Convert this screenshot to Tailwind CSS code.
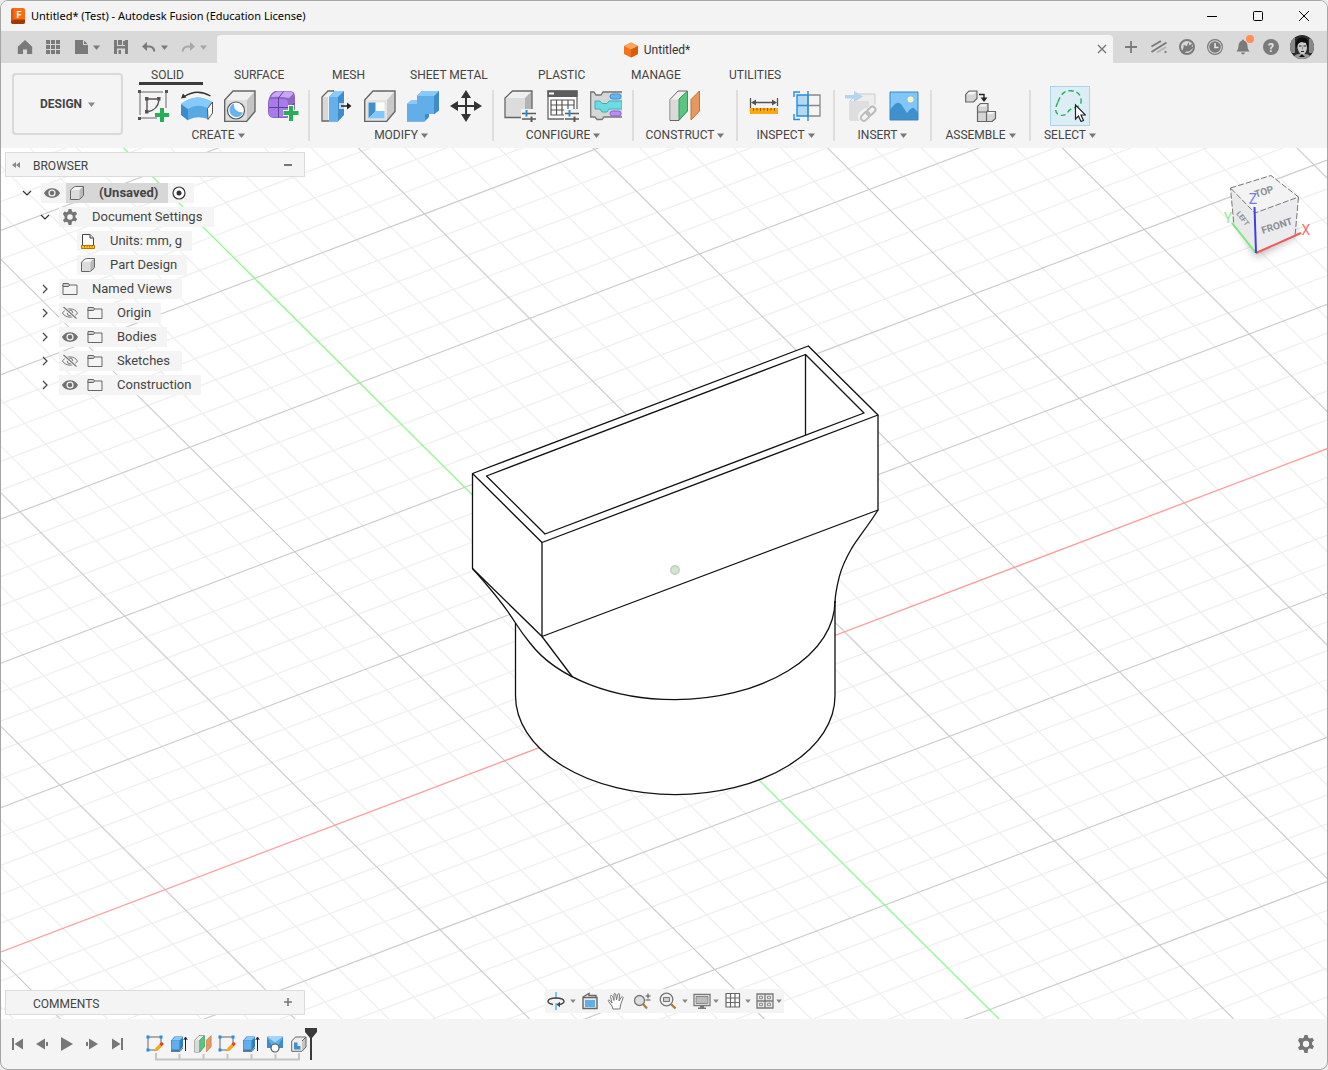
<!DOCTYPE html>
<html lang="en">

<head>
  <meta charset="UTF-8" />
  <meta name="viewport" content="width=device-width, initial-scale=1.0" />
  <title>Untitled* (Test) - Autodesk Fusion (Education License)</title>
  <script src="https://cdn.jsdelivr.net/npm/@tailwindcss/browser@4"></script>
</head>

<body class="bg-[#ececec] h-screen font-['Roboto','Liberation_Sans',sans-serif] text-xs text-[#444]">

  <!-- shared icons -->
  <svg class="hidden">
    <symbol id="caret" viewBox="0 0 7 5"><path d="M0 0.500h7L3.500 5z" fill="currentColor" /></symbol>
    <symbol id="chev-down" viewBox="0 0 10 10"><path d="M1 3l4 4 4-4" fill="none" stroke="#333" stroke-width="1.200" /></symbol>
    <symbol id="chev-right" viewBox="0 0 10 10"><path d="M3 1l4 4-4 4" fill="none" stroke="#444" stroke-width="1.200" /></symbol>
    <symbol id="eye" viewBox="0 0 16 16">
      <path d="M0 8C3 1.500 13 1.500 16 8C13 14.500 3 14.500 0 8z" fill="#707070" />
      <circle cx="8" cy="8" r="3.600" fill="#f4f4f4" /><circle cx="8" cy="8" r="2.300" fill="#707070" />
    </symbol>
    <symbol id="eye-off" viewBox="0 0 16 16">
      <path d="M.5 8C3.500 2.500 12.500 2.500 15.500 8C12.500 13.500 3.500 13.500.5 8z" fill="none" stroke="#777" />
      <circle cx="8" cy="8" r="2.800" fill="none" stroke="#777" />
      <path d="M1.500 2.500l13 11" stroke="#f4f4f4" stroke-width="3" /><path d="M1.500 2l13 11.500" stroke="#777" stroke-width="1.200" />
    </symbol>
    <symbol id="folder" viewBox="0 0 16 14">
      <path d="M1 12.500V3h14v9.500z" fill="#f4f4f4" stroke="#666" />
      <path d="M1 4.500v-3h5.500l1 1.500-1 1.500z" fill="#d0d0d0" stroke="#666" />
    </symbol>
    <symbol id="part" viewBox="0 0 16 16">
      <path d="M1.500 5v9.500h8.500l4-4V1.500H6z" fill="#dcdcdc" />
      <path d="M2 5l4-3.500h8L10.500 5z" fill="#f2f2f2" /><path d="M10.500 5L14 1.500v9l-3.500 4z" fill="#b9b9b9" />
      <path d="M1.500 6q0-1 .8-1.700L5 2q.8-.5 1.500-.5H14.500V10q0 .8-.6 1.300l-3 2.700q-.5.500-1.400.5h-8z" fill="none" stroke="#666" />
    </symbol>
    <symbol id="gear" viewBox="0 0 16 16">
      <path fill-rule="evenodd" fill="#757575" d="M6.600 0h2.800l.5 2.300 1.500.9 2.300-.8 1.400 2.500-1.700 1.600v2l1.700 1.600-1.400 2.500-2.300-.8-1.500.9L9.400 16H6.600l-.5-2.300-1.500-.9-2.300.8-1.400-2.500L2.600 9.500v-2L.9 4.900l1.400-2.500 2.300.8 1.500-.9zM8 5.200a2.800 2.800 0 1 0 0 5.600a2.800 2.800 0 0 0 0-5.600z" />
    </symbol>
    <symbol id="planes" viewBox="0 0 32 32">
      <path d="M1 9.500L9 1h9v20l-8 9.500H1z" fill="#f0f0f0" stroke="#666" />
      <path d="M1.500 9.500H10V30H1.500z" fill="#dadada" /><path d="M10 9l8.500-8v20L10 30z" fill="#58c580" stroke="#2f9c58" />
      <path d="M22 9.500L30.500 1v20L22 30z" fill="#e6985f" stroke="#c2703a" />
    </symbol>
    <symbol id="shell" viewBox="0 0 32 32">
      <path d="M.7 10L9 1h22v20.500l-8.500 10H.7z" fill="#efefef" /><path d="M23 10l8-9v20.500l-8 10z" fill="#c9c9c9" />
      <path d="M.7 10h22v21.500H.7z" fill="#e3e3e3" /><path d="M.7 10L9 1h22v20.500l-8.500 10H.7z" fill="none" stroke="#666" stroke-width="1.400" />
      <path d="M4.500 12.500h16v16h-16z" fill="#fff" /><path d="M4.500 12.500h7v9l-7 7z" fill="#3f8fcd" /><path d="M4.500 28.500l7-7.500h9v7.500z" fill="#82c6fb" />
    </symbol>
    <symbol id="tl-sketch" viewBox="0 0 18 18">
      <path d="M3 2h11M2 3v11M15 3v6M3 15h6" fill="none" stroke="#666" />
      <path d="M.5.500h3v3h-3zM13.500.500h3v3h-3zM.5 13.500h3v3h-3z" fill="#1e8fe6" />
      <path d="M8.500 16.500l1-3.500 4.500-4.500 2.500 2.500-4.500 4.500z" fill="#f5a81c" /><path d="M13.500 9l1.500-1.500q1-.8 2 .2t.2 2L15.700 11.200z" fill="#e23b2e" />
    </symbol>
    <symbol id="tl-extrude" viewBox="0 0 18 18">
      <path d="M1 5.500L4.500 1.500H13V12l-3.500 4H1z" fill="#2f7fc0" /><path d="M1.500 6h8v8q0 .5-.5.500H1.500z" fill="#62aee8" />
      <path d="M1.500 5.500L5 2h8L9.500 5.500z" fill="#86c8fa" /><path d="M1 16.500h9l3-3.500" fill="none" stroke="#777" />
      <path d="M15.500 16V3M13.800 5l1.700-3 1.700 3" fill="none" stroke="#222" />
    </symbol>
    <symbol id="config" viewBox="0 0 14 12"><path d="M0 3.500h14M0 9h14" stroke="#5a5a5a" stroke-width="1.600" /><path d="M4.500 0v6.500" stroke="#1e8fe6" stroke-width="2" /><path d="M9.500 6.500V12" stroke="#5a5a5a" stroke-width="2" /></symbol>
  </svg>

  <div class="h-full flex flex-col rounded-lg border border-[#a5a5a5] overflow-hidden bg-[#f4f4f4]">

    <!-- title bar -->
    <header class="h-[30px] shrink-0 flex items-center bg-[#f3f3f3] pl-2.5 text-black">
      <svg class="w-3.5 h-4 mr-1.5" viewBox="0 0 14 16">
        <rect width="14" height="16" rx="2" fill="#ff6a13" /><path d="M0 11.500h14V14q0 2-2 2H2q-2 0-2-2z" fill="#9c3a06" /><path d="M0 2l2.500-2v12L0 13z" fill="#e0560a" />
        <text x="8" y="9.500" text-anchor="middle" font-size="9" font-weight="700" fill="#fff" font-family="Roboto">F</text>
      </svg>
      <h1 class="font-['Noto_Sans',sans-serif] text-[11px] flex-1">Untitled* (Test) - Autodesk Fusion (Education License)</h1>
      <button class="w-[46px] h-full grid place-items-center" aria-label="Minimize"><svg class="size-3" viewBox="0 0 12 12"><path d="M1 6.500h10" stroke="#000" /></svg></button>
      <button class="w-[46px] h-full grid place-items-center" aria-label="Maximize"><svg class="size-3" viewBox="0 0 12 12"><rect x="1.500" y="1.500" width="9" height="9" rx="1" fill="none" stroke="#000" /></svg></button>
      <button class="w-[46px] h-full grid place-items-center" aria-label="Close"><svg class="size-3" viewBox="0 0 12 12"><path d="M1 1l10 10M11 1L1 11" stroke="#000" /></svg></button>
    </header>

    <!-- quick access and document tabs -->
    <div class="h-8 shrink-0 flex bg-[#d9d9d9] text-[#7a7a7a]">
      <div class="w-[216px] flex items-center gap-3 pl-4">
        <button aria-label="Home"><svg class="size-4" viewBox="0 0 16 16"><path d="M8 1L.8 7.800V15H6v-4.500h4V15h5.200V7.800z" fill="currentColor" /></svg></button>
        <button aria-label="Data panel"><svg class="size-4" viewBox="0 0 16 16"><path d="M1 1h4v4H1zM6 1h4v4H6zM11 1h4v4h-4zM1 6h4v4H1zM6 6h4v4H6zM11 6h4v4h-4zM1 11h4v4H1zM6 11h4v4H6zM11 11h4v4h-4z" fill="currentColor" /></svg></button>
        <button class="flex items-center gap-1 pr-px" aria-label="File"><svg class="size-4" viewBox="0 0 16 16"><path d="M2 1h8v5h5v9H2zM11 1.500L14.500 5H11z" fill="currentColor" /></svg><svg class="w-[7px] h-[5px]"><use href="#caret" /></svg></button>
        <button aria-label="Save"><svg class="size-4" viewBox="0 0 16 16"><path fill-rule="evenodd" d="M1 1h14v14H1zM4 1h8v6H4zM4 9.500h8V15H4z" fill="currentColor" /><path d="M5 1h4v5H5zM10 2h2v4h-2zM5.500 11h2.500v4H5.500z" fill="currentColor" /></svg></button>
        <button class="flex items-center gap-1" aria-label="Undo"><svg class="size-4" viewBox="0 0 16 16"><path d="M3 7.500h5.500q4.500.3 4.800 5" fill="none" stroke="currentColor" stroke-width="2" /><path d="M1 7.500l5-4.500v9z" fill="currentColor" /></svg><svg class="w-[7px] h-[5px]"><use href="#caret" /></svg></button>
        <button class="flex items-center gap-1 text-[#a8a8a8]" aria-label="Redo"><svg class="size-4" viewBox="0 0 16 16"><path d="M13 7.500H7.500q-4.500.3-4.800 5" fill="none" stroke="currentColor" stroke-width="2" /><path d="M15 7.500L10 3v9z" fill="currentColor" /></svg><svg class="w-[7px] h-[5px]"><use href="#caret" /></svg></button>
      </div>
      <div class="flex-1 mt-1 rounded-t bg-[#f4f4f4] flex items-center pr-[5px]">
        <div class="flex-1 flex items-center justify-center gap-[5px] pt-0.5 text-[#333]">
          <svg class="size-4" viewBox="0 0 16 16"><path d="M8 .5l7 3.500v8L8 15.500 1 12V4z" fill="#f2731c" /><path d="M8 .5l7 3.500-7 3.500L1 4z" fill="#ffa45e" /><path d="M8 7.500L15 4v8l-7 3.500z" fill="#d95a0b" /></svg>
          Untitled*
        </div>
        <button class="size-3" aria-label="Close tab"><svg viewBox="0 0 12 12"><path d="M2 2l8 8M10 2l-8 8" stroke="#777" stroke-width="1.400" /></svg></button>
      </div>
      <div class="w-[214px] flex items-center gap-2.5 pl-[9px]">
        <button aria-label="New tab"><svg class="size-[18px]" viewBox="0 0 18 18"><path d="M9 3v12M3 9h12" stroke="#7a7a7a" stroke-width="1.800" /></svg></button>
        <button aria-label="Extensions"><svg class="size-[18px]" viewBox="0 0 18 18"><path d="M1.500 8.500L11 3M1.500 14L16.500 4.500" stroke="#7a7a7a" stroke-width="2" /><path d="M7 14.500l9-5.500" stroke="#b5b5b5" stroke-width="2" /><circle cx="15.500" cy="14" r="1.200" fill="#8a8a8a" /></svg></button>
        <button aria-label="Online status"><svg class="size-[18px]" viewBox="0 0 18 18"><circle cx="9" cy="9" r="7" fill="#d9d9d9" stroke="#7a7a7a" stroke-width="2" /><path d="M3 14q3-3 2.500-7L9 8l1.500-4 1 3.500L15 5l-1.500 3.500 2 .5-2.500 3q-2 2-5 1.500l-2 2.500z" fill="#7a7a7a" /></svg></button>
        <button aria-label="Job status"><svg class="size-[18px]" viewBox="0 0 18 18"><circle cx="9" cy="9" r="7.400" fill="none" stroke="#7a7a7a" stroke-width="1.200" /><circle cx="9" cy="9" r="5.800" fill="#7a7a7a" /><path d="M9 5v4.500h3.500" fill="none" stroke="#eee" stroke-width="1.500" /></svg></button>
        <button class="relative" aria-label="Notifications"><svg class="size-[18px]" viewBox="0 0 18 18"><path d="M9 1.500q1 0 1.200 1.200Q13.500 4 13.500 8q0 4 2 5.500H2.500q2-1.500 2-5.500 0-4 3.300-5.300Q8 1.500 9 1.500zM7 14.500h4q-.5 2-2 2t-2-2z" fill="#7a7a7a" /></svg><span class="absolute -top-[3px] -right-0.5 size-2 rounded-full bg-[#ff8f52]"></span></button>
        <button aria-label="Help"><svg class="size-[18px]" viewBox="0 0 18 18"><circle cx="9" cy="9" r="8" fill="#7a7a7a" /><text x="9" y="13.500" text-anchor="middle" font-size="12" font-weight="700" fill="#e2e2e2">?</text></svg></button>
        <button aria-label="Profile"><svg class="size-6" viewBox="0 0 24 24">
          <clipPath id="round"><circle cx="12" cy="12" r="12" /></clipPath>
          <g clip-path="url(#round)"><path d="M0 0h24v24H0z" fill="#2c2c2c" /><path d="M0 3h5v15H0zM19 4h5v14h-5z" fill="#888" /><path d="M2 24q3-5 7-5h6q5 0 7 5z" fill="#9a9a9a" /><path d="M8 7q4-3 8 0l1 6q-1 6-4.500 7Q9 19 7.500 13z" fill="#cacaca" /><path d="M6 13Q4 3 12 2.500T18 13l-2-5-5-1-3 2z" fill="#0d0d0d" /><path d="M9 11h2.500M13.500 11H16M11 16.500h3" stroke="#222" stroke-width="1.200" /><path d="M12.500 11.500v3" stroke="#888" /><path d="M9 22l3-3 3 3" fill="#111" /></g>
        </svg></button>
      </div>
    </div>

    <!-- ribbon -->
    <div class="h-[85px] shrink-0 flex pl-[11px]">
      <button class="w-[111px] h-[62px] mt-2.5 mr-[5px] rounded border-2 border-[#d9d9d9] flex items-center justify-center gap-1.5 font-bold">DESIGN <svg class="w-[7px] h-[5px] text-[#888]"><use href="#caret" /></svg></button>
      <div>
        <nav class="grid grid-cols-[83px_98px_78px_128px_93px_98px_98px] pl-[11px] leading-4">
          <button class="h-[22px] pt-1 pl-3 w-16 text-left border-b-[3px] border-[#3c3c3c]">SOLID</button>
          <button class="h-[22px] pt-0.5 pl-3 text-left">SURFACE</button>
          <button class="h-[22px] pt-0.5 pl-3 text-left">MESH</button>
          <button class="h-[22px] pt-0.5 pl-3 text-left">SHEET METAL</button>
          <button class="h-[22px] pt-0.5 pl-3 text-left">PLASTIC</button>
          <button class="h-[22px] pt-0.5 pl-3 text-left">MANAGE</button>
          <button class="h-[22px] pt-0.5 pl-3 text-left">UTILITIES</button>
        </nav>

        <div class="flex pt-[5px] leading-4">
          <section class="w-[180px] flex flex-col items-center gap-[5px]">
            <div class="flex gap-[11px]">
              <button aria-label="Create sketch"><svg class="size-8" viewBox="0 0 32 32"><path d="M2 2h26v16M2 2v26h17" fill="none" stroke="#666" stroke-dasharray="23 3" /><path d="M0 0h3v3H0zM27 0h3v3h-3zM0 27h3v3H0zM7 7h3.500v3.500H7zM19 7h3.500v3.500H19zM7 20h3.500v3.500H7z" fill="#555" /><path d="M9 9v12.500M9 9h12v1q-1 10-12 12" fill="none" stroke="#555" stroke-width="1.400" /><path d="M22 18h4v5h5v4h-5v5h-4v-5h-5v-4h5z" fill="#25b057" /></svg></button>
              <button aria-label="Revolve"><svg class="size-8" viewBox="0 0 32 32"><path d="M0 14Q15 2 31 12l-4 17q-11-4-20 1L0 24z" fill="#58a8e4" /><path d="M0 14L7 19v11.500L0 25z" fill="#3d8cca" /><path d="M0 14Q15 2 31 12l-4.500 6Q16 13 7 19z" fill="#86c9fb" /><path d="M26.500 18.500L31.500 12v11L27 29.500z" fill="#fff" stroke="#555" /><path d="M2.500 7Q16-2 29.500 6" fill="none" stroke="#333" stroke-width="1.400" /><path d="M0 8.500l2-5 3.500 4z" fill="#333" /></svg></button>
              <button aria-label="Hole"><svg class="size-8" viewBox="0 0 32 32"><path d="M.7 10L9 1h22v20.500l-8.500 10H.7z" fill="#f0f0f0" /><path d="M23 10l8-9v20.500l-8 10z" fill="#c4c4c4" /><path d="M1 10h22v21H1z" fill="#dedede" /><path d="M.7 10L9 1h22v20.500l-8.500 10H.7z" fill="none" stroke="#666" stroke-width="1.400" /><circle cx="12" cy="20.500" r="8.500" fill="#fff" stroke="#555" stroke-width="1.200" /><path d="M10 13.500a7 7 0 1 0 9 9Q9 22 10 13.500z" fill="#66b3ee" /></svg></button>
              <button aria-label="Create form"><svg class="size-8" viewBox="0 0 32 32"><path d="M1 12Q2 4 8 1h15q5 0 5 6v12q-1 7-8 9H6q-5-1-5-6z" fill="#8c68c0" /><path d="M2 12q0-3 4-3h10q5 0 5 4v10q0 4-4 4H6q-4 0-4-4z" fill="#a87bea" /><path d="M4 7q2-4 6-5.500h13q3 .5 3 2.500l-4 4Q12 6 4 7z" fill="#caa6fb" /><path d="M11.500 8v19.500M2 17.500h19.500l6-4M11.500 8l5-6.500" fill="none" stroke="#5e4191" /><path d="M21 15h6v5h5v6h-5v5h-6v-5h-5v-6h5z" fill="#f4f4f4" /><path d="M22 16h4v5h5.500v4H26v6h-4v-6h-5.500v-4H22z" fill="#25b057" /></svg></button>
            </div>
            <button class="flex items-center gap-[3px]">CREATE <svg class="w-[7px] h-[5px] text-[#777]"><use href="#caret" /></svg></button>
          </section>
          <div class="w-0.5 h-[51px] bg-[#dedede]"></div>

          <section class="w-[182px] flex flex-col items-center gap-[5px]">
            <div class="flex gap-[11px]">
              <button aria-label="Press pull"><svg class="size-8" viewBox="0 0 32 32"><path d="M1 7l6-6h9v30H1z" fill="#f1f1f1" /><path d="M1.500 7H7v24H1.500z" fill="#d8d8d8" /><path d="M8 31H1V7l6-6h6" fill="none" stroke="#666" stroke-width="1.300" /><path d="M8 7l6-6h9v24l-6 6.500H8z" fill="#3e8dca" /><path d="M8 7h9v24.500H8z" fill="#63b0ea" /><path d="M8 7l6-6h9l-6 6z" fill="#88cafc" /><path d="M18 13h9v6h-9z" fill="#f4f4f4" opacity=".7" /><path d="M20 16h8" stroke="#222" stroke-width="1.500" /><path d="M26 12.500l4.500 3.500-4.500 3.500z" fill="#222" /></svg></button>
              <button aria-label="Shell"><svg class="size-8"><use href="#shell" /></svg></button>
              <button aria-label="Combine"><svg class="size-8" viewBox="0 0 32 32"><path d="M0 14l4-3.500h6V6l5-5h17v19.500l-4.500 3.500H22v3l-4.500 4.500H0z" fill="#3d8bc9" /><path d="M0 14h10V6h17v18h-9v7.500H0z" fill="#62aee8" /><path d="M10 6l5-5h17l-5 5zM0 14l4-3.500h6V14z" fill="#88cafc" /></svg></button>
              <button aria-label="Move"><svg class="size-8" viewBox="0 0 32 32"><path d="M16 4v24M4 16h24" stroke="#333" stroke-width="2" /><path d="M16 0l5 8H11zM16 32l5-8H11zM0 16l8-5v10zM32 16l-8-5v10z" fill="#333" /></svg></button>
            </div>
            <button class="flex items-center gap-[3px]">MODIFY <svg class="w-[7px] h-[5px] text-[#777]"><use href="#caret" /></svg></button>
          </section>
          <div class="w-0.5 h-[51px] bg-[#dedede]"></div>

          <section class="w-[138px] flex flex-col items-center gap-[5px]">
            <div class="flex gap-[11px]">
              <button aria-label="Configure model"><svg class="size-8" viewBox="0 0 32 32"><path d="M1 8l8-7h19v26H1z" fill="#efefef" /><path d="M21 8l7-7v18l-7 8z" fill="#b3b3b3" /><path d="M1 8h20v19.500H1z" fill="#dcdcdc" /><path d="M18 27.500H1V8l7.500-7H28v18" fill="none" stroke="#666" stroke-width="1.300" /><path d="M17 19h15v13H17z" fill="#f4f4f4" /><use href="#config" x="18" y="20" width="14" height="12" /></svg></button>
              <button aria-label="Configuration table"><svg class="size-8" viewBox="0 0 32 32"><path d="M1 1h29v28H1z" fill="#fff" stroke="#666" stroke-width="1.300" /><path d="M.5.500h30V7H.5z" fill="#5c5c5c" /><path d="M2 2.500h5v2H2z" fill="#fff" /><path d="M4 10h23v15H4zM4 15h23M4 20h23M9.500 10v15M15 10v15M21 10v15" fill="none" stroke="#555" stroke-width="1.200" /><path d="M17 19h15v13H17z" fill="#f4f4f4" /><use href="#config" x="18" y="20" width="14" height="12" /></svg></button>
              <button aria-label="Theme table"><svg class="size-8" viewBox="0 0 32 32"><path d="M.7 1H4l2 3.500h5L13 1h19v26H14l-2 3H7l-2-3H.7z" fill="#d6d6d6" /><path d="M32 2H13l-2 3H6L4 2H.7v25H5l2 2.500h5l2-2.500h18" fill="none" stroke="#777" stroke-width="1.300" /><path d="M5 11h5l2 2.500h5L19 11h13v8H19l-2 3h-5l-2-3H5z" fill="#6ddbe2" stroke="#3cb0b8" /><rect x="20" y="4" width="11" height="5" rx="2.500" fill="#63b6f5" stroke="#3a8fd3" /><rect x="20" y="21" width="11" height="5" rx="2.500" fill="#b78df6" stroke="#8a5fd0" /></svg></button>
            </div>
            <button class="flex items-center gap-[3px]">CONFIGURE <svg class="w-[7px] h-[5px] text-[#777]"><use href="#caret" /></svg></button>
          </section>
          <div class="w-0.5 h-[51px] bg-[#dedede]"></div>

          <section class="w-[102px] flex flex-col items-center gap-[5px]">
            <button aria-label="Offset plane"><svg class="size-8"><use href="#planes" /></svg></button>
            <button class="flex items-center gap-[3px]">CONSTRUCT <svg class="w-[7px] h-[5px] text-[#777]"><use href="#caret" /></svg></button>
          </section>
          <div class="w-0.5 h-[51px] bg-[#dedede]"></div>

          <section class="w-[95px] flex flex-col items-center gap-[5px]">
            <div class="flex gap-[11px]">
              <button aria-label="Measure"><svg class="size-8" viewBox="0 0 32 32"><path d="M2.500 8v14M29.500 8v8M5 12.500h22" stroke="#555" stroke-width="1.300" /><path d="M3 12.500L8 9.500v6zM29 12.500l-5-3v6z" fill="#555" /><path d="M2 18h28v6H2z" fill="#fba90b" /><path d="M5.500 18v3M9 18v2.500M12.500 18v3M16 18v2.500M19.500 18v3M23 18v2.500M26.500 18v3" stroke="#8c5a00" /></svg></button>
              <button aria-label="Section analysis"><svg class="size-8" viewBox="0 0 32 32"><path d="M6 5h11v21H6z" fill="#b4d7f2" /><path d="M17 5h12v21H17zM17 15.500h12" fill="none" stroke="#888" stroke-width="1.300" /><path d="M6 5h11v21H6zM6 15.500h11M17 1v30M3 7V2h6M3 24v5.500h6" fill="none" stroke="#1e8fe6" stroke-width="1.400" /></svg></button>
            </div>
            <button class="flex items-center gap-[3px]">INSPECT <svg class="w-[7px] h-[5px] text-[#777]"><use href="#caret" /></svg></button>
          </section>
          <div class="w-0.5 h-[51px] bg-[#dedede]"></div>

          <section class="w-[95px] flex flex-col items-center gap-[5px]">
            <div class="flex gap-[11px]">
              <button aria-label="Insert derive"><svg class="size-8" viewBox="0 0 32 32"><path d="M5 11l7-7h18v17l-6 9H5z" fill="#ededed" stroke="#ccc" /><path d="M5.500 11H24v19H5.500z" fill="#dedede" /><path d="M0 5h9V1l9 5.500-9 5.500V8.500H0z" fill="#b3d6ec" /><g fill="none"><g stroke="#f4f4f4" stroke-width="6"><rect x="15" y="22.500" width="10" height="6" rx="3" transform="rotate(-45 20 25)" /><rect x="22" y="19" width="10" height="6" rx="3" transform="rotate(-45 27 22)" /></g><g stroke="#bcbcbc" stroke-width="2"><rect x="15" y="23.500" width="10" height="6" rx="3" transform="rotate(-45 20 26)" /><rect x="21" y="18" width="10" height="6" rx="3" transform="rotate(-45 26 21)" /></g></g></svg></button>
              <button aria-label="Canvas"><svg class="size-8" viewBox="0 0 32 32"><path d="M2 2h28v28H2z" fill="#80c6fb" /><path d="M2 20q4-6 7-7t6 4l4 6q3-4 5-5t6 5v7H2z" fill="#3f90cc" /><circle cx="22.500" cy="9.500" r="3" fill="#fdf6c0" /><path d="M2 2h28v28H2z" fill="none" stroke="#3d87bf" /></svg></button>
            </div>
            <button class="flex items-center gap-[3px]">INSERT <svg class="w-[7px] h-[5px] text-[#777]"><use href="#caret" /></svg></button>
          </section>
          <div class="w-0.5 h-[51px] bg-[#dedede]"></div>

          <section class="w-[97px] flex flex-col items-center gap-[5px]">
            <button aria-label="New component"><svg class="size-8" viewBox="0 0 32 32"><g fill="#d5d5d5" stroke="#666" stroke-width="1.200"><path d="M.7 4.500L4 1h8v7.500L8.500 12H.7z" /><path d="M12.500 16.500l3-3H23v8h7.500v7L27 31.500H12.500z" /><path d="M12.500 22h9v9.500M21.500 22l1.500-1.500" fill="none" /></g><path d="M1.500 4.500L4 2h7L8.500 4.500zM13.500 16.500l2-2H22l-2 2zM22 24l2-2h5.500l-2 2z" fill="#f6f6f6" /><path d="M14 4.500h5V9" fill="none" stroke="#222" stroke-width="1.400" /><path d="M15.500 7.500h7L19 12z" fill="#222" /></svg></button>
            <button class="flex items-center gap-[3px]">ASSEMBLE <svg class="w-[7px] h-[5px] text-[#777]"><use href="#caret" /></svg></button>
          </section>
          <div class="w-0.5 h-[51px] bg-[#dedede]"></div>

          <section class="w-[78px] flex flex-col items-center gap-[5px]">
            <button class="p-[3px] -m-1 border border-[#a9d5ea] bg-[#dcedf6]" aria-label="Select"><svg class="size-8" viewBox="0 0 32 32"><path d="M4 12Q8 0 17 .8T27 9q1 7-6 8.500-5 1-7.500 5T5 25Q-1 22 4 12z" fill="none" stroke="#25b057" stroke-width="1.400" stroke-dasharray="5 3" /><path d="M21.500 15v14l3-3 2.500 5.500 2.500-1-2.500-5.500h4.500z" fill="#fff" stroke="#222" stroke-width="1.200" /></svg></button>
            <button class="flex items-center gap-[3px]">SELECT <svg class="w-[7px] h-[5px] text-[#777]"><use href="#caret" /></svg></button>
          </section>
        </div>
      </div>
    </div>

    <!-- viewport -->
    <main class="relative flex-1 min-h-0 bg-white">
      <svg class="absolute inset-0 size-full" viewBox="1 148 1326 871" preserveAspectRatio="xMidYMid slice">
        <g id="grid"></g>
        <g fill="#fff" stroke="#111" stroke-width="1.300" stroke-linejoin="round">
          <path stroke="none" d="M472.500 473.500L808.300 346 878 415V510C868 526 858 538 851.700 548.300C845 560 835 580 835 603V696A159.750 98.600 0 0 1 515.500 696V623L472.500 568.500z" />
          <g fill="none">
            <path d="M472.500 473.500L808.300 346 878 415 542 542.500z" />
            <path d="M486.500 476L805.500 354.500 864 413 545 534z" />
            <path d="M805.500 354.500V435M472.500 473.500V568.500L542 636.500 878 510V415M542 542.500V636.500" />
            <path d="M472.500 568.500C490 588 505 606 515.500 623C520 630 525 637 530 643A160 98.600 0 0 0 675 699.600A160 98.600 0 0 0 835 601" />
            <path d="M542 636.500Q553 651 572.500 677" />
            <path d="M878 510C868 526 858 538 851.700 548.300C845 560 841 570 839.300 576.700C836.500 588 835 597 835 603" />
            <path d="M515.500 623V696A159.750 98.600 0 0 0 835 696V601" />
          </g>
        </g>
        <circle cx="675" cy="570" r="4.200" fill="#cbe9c6" stroke="#c3cac2" stroke-width="1.400" />
      </svg>

      <!-- view cube -->
      <svg class="absolute right-[9px] top-5 w-[100px] h-24" viewBox="1218 168 100 96">
        <defs><filter id="soft" x="-30%" y="-30%" width="160%" height="160%"><feGaussianBlur stdDeviation="4" /></filter></defs>
        <path d="M1234 216L1256 257 1296 236 1290 214z" fill="#777" opacity=".55" filter="url(#soft)" />
        <path d="M1230.500 188L1271 175.500 1298.500 197 1295 236 1256 253 1234 226z" fill="#ececee" />
        <path d="M1230.500 188L1271 175.500 1298.500 197 1255 213z" fill="#f3f3f4" />
        <path d="M1230.500 188L1255 213 1256 253 1234 226z" fill="#e9e9ea" />
        <path d="M1230.500 188L1271 175.500 1298.500 197 1255 213zM1298.500 197L1295 236 1256 253 1234 226 1230.500 188" fill="none" stroke="#777" stroke-dasharray="6 2" />
        <g fill="#8b8f96" font-weight="700" text-anchor="middle">
          <text font-size="10" transform="translate(1265 195) rotate(-17)">TOP</text>
          <text font-size="10" transform="translate(1278 229) rotate(-18)">FRONT</text>
          <text font-size="7" transform="translate(1241 220) rotate(52)">LEFT</text>
        </g>
        <path d="M1256 253L1232 223" stroke="#7de87d" stroke-width="2" /><path d="M1256 253L1301 233" stroke="#f05a5a" stroke-width="2" /><path d="M1256 253L1254.500 207" stroke="#4040e0" stroke-width="2" />
        <g font-size="14" text-anchor="middle"><text x="1253" y="204" fill="#7676f5">Z</text><text x="1228" y="223" fill="#8df08d">Y</text><text x="1306" y="235" fill="#f57575">X</text></g>
      </svg>

      <div class="relative h-full flex flex-col justify-between p-1">
        <aside class="text-[13px]">
          <div class="w-[300px] h-[25px] mb-1 pl-1.5 pr-3 flex items-center border border-[#dcdcdc] bg-[#f4f4f4] text-xs">
            <svg class="w-2 h-1.5" viewBox="0 0 8 6"><path d="M4 0v6L0 3zM8 0v6L4 3z" fill="#888" /></svg>
            <h2 class="flex-1 pl-[13px] pt-0.5">BROWSER</h2>
            <button class="w-2 h-0.5 bg-[#777]" aria-label="Collapse browser"></button>
          </div>
          <ul class="leading-5">
            <li class="h-6 flex items-center pl-[17px]">
              <svg class="size-2.5 mr-[9px]"><use href="#chev-down" /></svg>
              <div class="flex items-center h-5 bg-[#f4f4f4] pl-[3px] pr-[7px]">
                <svg class="size-4 mr-1.5"><use href="#eye" /></svg>
                <span class="flex items-center h-5 bg-[#d7d7d7] pl-[3px] pr-2.5 mr-[3px] font-bold"><svg class="size-4 mr-3.5"><use href="#part" /></svg>(Unsaved)</span>
                <svg class="size-4" viewBox="0 0 16 16"><circle cx="8" cy="8" r="6" fill="#fff" stroke="#333" stroke-width="1.200" /><circle cx="8" cy="8" r="2.500" fill="#333" /></svg>
              </div>
            </li>
            <li class="h-6 flex items-center pl-[35px]">
              <svg class="size-2.5 mr-[9px]"><use href="#chev-down" /></svg>
              <div class="flex items-center h-5 bg-[#f4f4f4] pl-[3px] pr-3"><svg class="size-4 mr-3.5"><use href="#gear" /></svg>Document Settings</div>
            </li>
            <li class="h-6 flex items-center pl-[72px]">
              <div class="flex items-center h-5 bg-[#f4f4f4] pl-[3px] pr-2.5"><svg class="size-4 mr-3.5" viewBox="0 0 16 16"><path d="M2.500 12V1.500H10l3.500 3.500v7" fill="#fafafa" stroke="#444" /><path d="M10 1.500V5h3.500" fill="#ddd" stroke="#444" /><path d="M1.500 12.500h13v3h-13z" fill="#ffc91f" stroke="#b87400" /><path d="M4.500 12.500v2M7 12.500v2M9.500 12.500v2M12 12.500v2" stroke="#b87400" /></svg>Units: mm, g</div>
            </li>
            <li class="h-6 flex items-center pl-[72px]">
              <div class="flex items-center h-5 bg-[#f4f4f4] pl-[3px] pr-2.5"><svg class="size-4 mr-3.5"><use href="#part" /></svg>Part Design</div>
            </li>
            <li class="h-6 flex items-center pl-[35px]">
              <svg class="size-2.5 mr-[9px]"><use href="#chev-right" /></svg>
              <div class="flex items-center h-5 bg-[#f4f4f4] pl-[3px] pr-2.5"><svg class="w-4 h-3.5 mr-3.5"><use href="#folder" /></svg>Named Views</div>
            </li>
            <li class="h-6 flex items-center pl-[35px]">
              <svg class="size-2.5 mr-[9px]"><use href="#chev-right" /></svg>
              <div class="flex items-center h-5 bg-[#f4f4f4] pl-[3px] pr-2.5"><svg class="size-4 mr-[9px]"><use href="#eye-off" /></svg><svg class="w-4 h-3.5 mr-3.5"><use href="#folder" /></svg>Origin</div>
            </li>
            <li class="h-6 flex items-center pl-[35px]">
              <svg class="size-2.5 mr-[9px]"><use href="#chev-right" /></svg>
              <div class="flex items-center h-5 bg-[#f4f4f4] pl-[3px] pr-2.5"><svg class="size-4 mr-[9px]"><use href="#eye" /></svg><svg class="w-4 h-3.5 mr-3.5"><use href="#folder" /></svg>Bodies</div>
            </li>
            <li class="h-6 flex items-center pl-[35px]">
              <svg class="size-2.5 mr-[9px]"><use href="#chev-right" /></svg>
              <div class="flex items-center h-5 bg-[#f4f4f4] pl-[3px] pr-3"><svg class="size-4 mr-[9px]"><use href="#eye-off" /></svg><svg class="w-4 h-3.5 mr-3.5"><use href="#folder" /></svg>Sketches</div>
            </li>
            <li class="h-6 flex items-center pl-[35px]">
              <svg class="size-2.5 mr-[9px]"><use href="#chev-right" /></svg>
              <div class="flex items-center h-5 bg-[#f4f4f4] pl-[3px] pr-2.5"><svg class="size-4 mr-[9px]"><use href="#eye" /></svg><svg class="w-4 h-3.5 mr-3.5"><use href="#folder" /></svg>Construction</div>
            </li>
          </ul>
        </aside>

        <div class="grid grid-cols-[1fr_auto_1fr] items-center">
          <div class="w-[300px] h-[25px] pl-[27px] pr-3 flex items-center border border-[#dcdcdc] bg-[#f4f4f4]">
            <h2 class="flex-1 pt-[3px]">COMMENTS</h2>
            <button aria-label="Add comment"><svg class="size-2" viewBox="0 0 8 8"><path d="M4 0v8M0 4h8" stroke="#777" stroke-width="1.600" /></svg></button>
          </div>
          <div class="h-6 mb-0.5 px-0.5 flex items-center gap-[5px] bg-[#f4f4f4] text-[#888]">
            <button class="flex items-center gap-[5px]" aria-label="Orbit"><svg class="size-[18px]" viewBox="0 0 18 18"><path d="M9 0v7M9 11v7" stroke="#7cc3f7" stroke-width="2" /><path d="M6 12.500Q1 11.500 1 9.200 1.500 6 9 6t8 3.200q0 2.500-5 3.300" fill="none" stroke="#444" stroke-width="1.400" /><path d="M13 9.800v5.500L9.500 12.500z" fill="#444" /></svg><svg class="w-1.5 h-1"><use href="#caret" /></svg></button>
            <div class="flex gap-2">
              <button aria-label="Look at"><svg class="size-[18px]" viewBox="0 0 18 18"><path d="M2 5.500h14v11H2z" fill="#e8e8e8" stroke="#666" stroke-width="1.400" /><path d="M4 8h10v7H4z" fill="#62aee8" /><path d="M2 5l6-3.500v2h7V6" fill="none" stroke="#666" stroke-width="1.400" /></svg></button>
              <button aria-label="Pan"><svg class="size-[18px]" viewBox="0 0 18 18"><path d="M6 17l-1-3L1.500 9.500q-.8-1.300.2-1.500T5 11L3.500 4.500q0-1.300 1.200-1T7 8.500V2q.7-1.300 1.700 0L9.500 8l1.500-6q1-1 1.700.3L12 9l2.500-4q1.200-.8 1.700.5L13.500 13l-.5 4z" fill="#fff" stroke="#777" /></svg></button>
              <button aria-label="Zoom"><svg class="size-[18px]" viewBox="0 0 18 18"><circle cx="6.500" cy="8.500" r="5" fill="#ddd" stroke="#777" stroke-width="1.300" /><path d="M10 12l4 4.500" stroke="#b07a35" stroke-width="2.200" /><path d="M12.500 4h5M15 1.500v5M12.500 8h5" stroke="#555" stroke-width="1.100" /></svg></button>
              <button class="flex items-center gap-[5px]" aria-label="Fit"><svg class="size-[18px]" viewBox="0 0 18 18"><circle cx="7.500" cy="7.500" r="6.300" fill="#f0f0f0" stroke="#777" stroke-width="1.300" /><path d="M4.500 5.500h6v4h-6z" fill="#ccc" stroke="#777" /><path d="M12 12l4.500 4.500" stroke="#b07a35" stroke-width="2.400" /></svg><svg class="w-1.5 h-1"><use href="#caret" /></svg></button>
            </div>
            <button class="flex items-center gap-0.5" aria-label="Display settings"><svg class="size-[18px]" viewBox="0 0 18 18"><path d="M1 2.500h16v11H1z" fill="#fff" stroke="#777" stroke-width="1.300" /><path d="M3 4.500h12v7H3z" fill="#bbb" stroke="#888" /><path d="M7 14h4v1.500h2V17H5v-1.500h2z" fill="#777" /></svg><svg class="w-1.5 h-1"><use href="#caret" /></svg></button>
            <button class="flex items-center gap-[3px]" aria-label="Grid and snaps"><svg class="size-[18px]" viewBox="0 0 18 18"><path d="M2 1.500h13.500V15H2zM2 6h13.500M2 10.500h13.500M6.500 1.500V15M11 1.500V15" fill="#fff" stroke="#666" stroke-width="1.200" /></svg><svg class="w-1.5 h-1"><use href="#caret" /></svg></button>
            <button class="flex items-center gap-0.5" aria-label="Viewports"><svg class="size-[18px]" viewBox="0 0 18 18"><path d="M1 2h16v14H1zM9 2v14M1 9h16" fill="#ececec" stroke="#777" stroke-width="1.300" /><path d="M3.500 4.300h3v2.400h-3zM11.500 4.300h3v2.400h-3zM3.500 11.300h3v2.400h-3zM11.500 11.300h3v2.400h-3z" fill="none" stroke="#888" /></svg><svg class="w-1.5 h-1"><use href="#caret" /></svg></button>
          </div>
        </div>
      </div>
    </main>

    <!-- timeline -->
    <footer class="h-[50px] shrink-0 flex items-center justify-between pl-2 pr-3">
      <div class="flex items-center">
        <div class="flex gap-[9px] mr-[18px] text-[#777]">
          <button aria-label="Go to start"><svg class="size-4" viewBox="0 0 16 16"><path d="M3 2h2v12H3zM14 2.500v11L5.500 8z" fill="currentColor" /></svg></button>
          <button aria-label="Step back"><svg class="size-4" viewBox="0 0 16 16"><path d="M11 2.500v11L2 8zM12 6h2v4h-2z" fill="currentColor" /></svg></button>
          <button aria-label="Play"><svg class="size-4" viewBox="0 0 16 16"><path d="M2 1l12 7-12 7z" fill="currentColor" /></svg></button>
          <button aria-label="Step forward"><svg class="size-4" viewBox="0 0 16 16"><path d="M5 2.500v11L14 8zM2 6h2v4H2z" fill="currentColor" /></svg></button>
          <button aria-label="Go to end"><svg class="size-4" viewBox="0 0 16 16"><path d="M3 2.500v11L11.500 8zM12 2h2v12h-2z" fill="currentColor" /></svg></button>
        </div>
        <div class="pt-2">
          <div class="flex">
            <button class="w-6 grid place-items-center" aria-label="Sketch 1"><svg class="size-[18px]"><use href="#tl-sketch" /></svg></button>
            <button class="w-6 grid place-items-center" aria-label="Extrude 1"><svg class="size-[18px]"><use href="#tl-extrude" /></svg></button>
            <button class="w-6 grid place-items-center" aria-label="Plane 1"><svg class="size-[18px]"><use href="#planes" /></svg></button>
            <button class="w-6 grid place-items-center" aria-label="Sketch 2"><svg class="size-[18px]"><use href="#tl-sketch" /></svg></button>
            <button class="w-6 grid place-items-center" aria-label="Extrude 2"><svg class="size-[18px]"><use href="#tl-extrude" /></svg></button>
            <button class="w-6 grid place-items-center" aria-label="Loft"><svg class="size-[18px]" viewBox="0 0 18 18"><path d="M1 1.500h16V13h-3.500L9 9l-4.500 4H1z" fill="#62aee8" /><path d="M1 1.500l8 6 8-6z" fill="#a3d5fb" /><path d="M1 2l5 9-2 2H1zM17 2l-5 9 2 2h3z" fill="#3d8bc9" /><circle cx="9" cy="13" r="4" fill="#fff" stroke="#555" stroke-width="1.200" /></svg></button>
            <button class="w-6 grid place-items-center" aria-label="Shell"><svg class="size-4" viewBox="0 0 16 16"><path d="M.7 5L4.500 1H15v10l-4 4.300H.7z" fill="#ededed" /><path d="M11 5l4-4v10l-4 4z" fill="#c4c4c4" /><path d="M.7 5L4.500 1H15v10l-4 4.300H.7zM11 5l4-4" fill="none" stroke="#666" /><path d="M3 6.500h3.500v3.500H9.500v3.500H3z" fill="#3f8fcd" /></svg></button>
          </div>
          <svg class="w-[168px] h-2" viewBox="0 0 168 8"><path d="M13 0v6.500h143V0M36.500 1v5M60.500 1v5M84.500 1v5M108.500 1v5M132.500 1v5" fill="none" stroke="#c4c4c4" stroke-width="2" /></svg>
        </div>
        <svg class="w-3 h-8 -ml-1.5" viewBox="0 0 12 32"><path d="M0 0h12v4L7 10v22H5V10L0 4z" fill="#3a3a3a" /></svg>
      </div>
      <button aria-label="Timeline settings"><svg class="size-[18px]"><use href="#gear" /></svg></button>
    </footer>
  </div>

  <script>
    // ground grid: two families of parallel lines, every fifth one is heavier
    const grid = document.getElementById('grid');

    function addLine(y0, slope, color, width) {
      const line = document.createElementNS('http://www.w3.org/2000/svg', 'line');
      line.setAttribute('x1', -400);
      line.setAttribute('y1', y0 - 400 * slope);
      line.setAttribute('x2', 1800);
      line.setAttribute('y2', y0 + 1800 * slope);
      line.setAttribute('stroke', color);
      line.setAttribute('stroke-width', width);
      grid.appendChild(line);
    }

    const families = [
      { y0: 952.2, slope: -0.3794, step: 144.3 / 5, axis: '#ff9a9a' },
      { y0: 25, slope: 0.995, step: 233.5 / 5, axis: '#8dfa8d' }
    ];

    for (const f of families) {
      for (let i = -50; i <= 50; i++) {
        if (i % 5 !== 0) addLine(f.y0 + i * f.step, f.slope, '#efefef', 1.3);
      }
    }
    for (const f of families) {
      for (let i = -50; i <= 50; i += 5) {
        if (i !== 0) addLine(f.y0 + i * f.step, f.slope, '#cdcdcd', 1.2);
      }
    }
    for (const f of families) addLine(f.y0, f.slope, f.axis, 1.3);
  </script>
</body>

</html>
